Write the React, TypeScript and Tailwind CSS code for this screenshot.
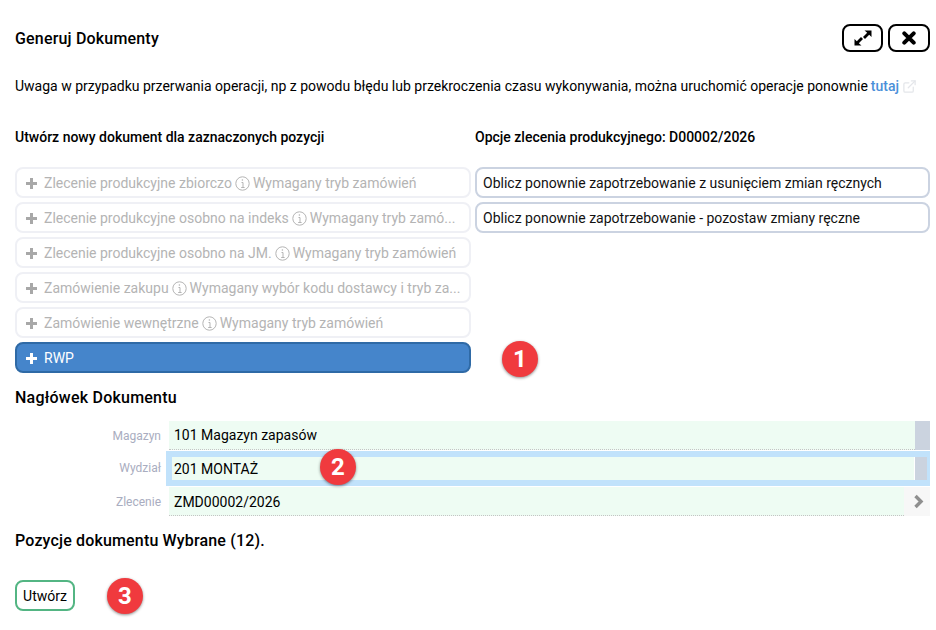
import { FiExternalLink } from "react-icons/fi";

function Plus({ className }: { className: string }) {
  return (
    <svg width="11" height="11" viewBox="0 0 11 11" className={`shrink-0 mr-[7px] ${className}`}>
      <path d="M5.5 0.5V10.5M0.5 5.5H10.5" stroke="currentColor" strokeWidth="3" strokeLinecap="round" />
    </svg>
  );
}

function Info() {
  return (
    <svg width="15" height="15" viewBox="0 0 15 15" fill="none" stroke="#b4b4b4" className="shrink-0 mx-[3px]">
      <circle cx="7.5" cy="7.5" r="6.7" strokeWidth="1" />
      <path d="M6.5 6.5H8V11.5M6.2 11.5H9.6" strokeWidth="1" />
      <circle cx="7.4" cy="4" r="0.8" fill="#b4b4b4" stroke="none" />
    </svg>
  );
}

function Disabled({ name, note }: { name: string; note: string }) {
  return (
    <div className="h-[31px] flex items-center border-2 border-[#eff0f5] rounded-lg bg-white px-[9px] pt-[1px] text-[#b4b4b4] text-[14px] whitespace-nowrap overflow-hidden">
      <Plus className="text-[#a8a8a8]" />
      <span>{name}</span>
      <Info />
      <span>{note}</span>
    </div>
  );
}

function Option({ text }: { text: string }) {
  return (
    <div className="h-[31px] flex items-center border-2 border-[#cbd3e1] rounded-lg bg-white px-[6px] pt-[1px] text-[14px] text-[#111]">
      {text}
    </div>
  );
}

function Badge({ n, className }: { n: number; className: string }) {
  return (
    <div
      className={`absolute w-9 h-9 rounded-full bg-[#f03a3e] text-white font-bold text-[24px] flex items-center justify-center shadow-[0_1px_3px_rgba(0,0,0,0.45)] ${className}`}
    >
      {n}
    </div>
  );
}

export default function App() {
  return (
    <div className="relative w-[936px] h-[630px] bg-white overflow-hidden text-black pl-[15px] pr-[6px] pt-[24px] font-['Roboto',sans-serif]">
      <div className="flex items-center justify-between h-[28px]">
        <div className="text-[16px] font-medium leading-[26px] pt-[2px] tracking-[0.18px]">Generuj Dokumenty</div>
        <div className="flex gap-[5px]">
          <button className="w-[41px] h-[28px] border-2 border-black rounded-lg flex items-center justify-center">
            <svg width="18" height="16" viewBox="0 0 18 16">
              <path d="M10.5 0.5H17.5V7L15.2 4.8L11 9L9 7L13.2 2.8ZM7.5 15.5H0.5V9L2.8 11.2L7 7L9 9L4.8 13.2Z" fill="black" />
            </svg>
          </button>
          <button className="w-[42px] h-[28px] border-2 border-black rounded-lg flex items-center justify-center">
            <svg width="14" height="14" viewBox="0 0 14 14">
              <path d="M2.3 2.3L11.7 11.7M11.7 2.3L2.3 11.7" stroke="black" strokeWidth="4" strokeLinecap="round" />
            </svg>
          </button>
        </div>
      </div>

      <div className="mt-[26px] text-[14px] leading-[16px] flex items-center whitespace-nowrap">
        <span>
          Uwaga w przypadku przerwania operacji, np z powodu błędu lub przekroczenia czasu wykonywania, można uruchomić operacje ponownie{" "}
        </span>
        <span className="text-[#4a90d9] font-medium ml-[3px]">tutaj</span>
        <FiExternalLink className="text-[15px] text-[#e4e6ea] ml-[3px]" />
      </div>

      <div className="mt-[35px] flex gap-[4px]">
        <div className="w-[456px]">
          <div className="text-[14px] font-medium leading-[16px] mb-[22px]">Utwórz nowy dokument dla zaznaczonych pozycji</div>
          <div className="flex flex-col gap-[4px]">
            <Disabled name="Zlecenie produkcyjne zbiorczo" note="Wymagany tryb zamówień" />
            <Disabled name="Zlecenie produkcyjne osobno na indeks" note="Wymagany tryb zamó..." />
            <Disabled name="Zlecenie produkcyjne osobno na JM." note="Wymagany tryb zamówień" />
            <Disabled name="Zamówienie zakupu" note="Wymagany wybór kodu dostawcy i tryb za..." />
            <Disabled name="Zamówienie wewnętrzne" note="Wymagany tryb zamówień" />
            <div className="h-[31px] flex items-center border-2 border-[#2f6aa6] rounded-lg bg-[#4585cb] px-[9px] pt-[1px] text-white text-[14px]">
              <Plus className="text-white" />
              RWP
            </div>
          </div>
        </div>
        <div className="w-[455px]">
          <div className="text-[14px] font-medium leading-[16px] mb-[22px]">Opcje zlecenia produkcyjnego: D00002/2026</div>
          <div className="flex flex-col gap-[4px]">
            <Option text="Oblicz ponownie zapotrzebowanie z usunięciem zmian ręcznych" />
            <Option text="Oblicz ponownie zapotrzebowanie - pozostaw zmiany ręczne" />
          </div>
        </div>
      </div>

      <div className="mt-[16px] text-[16px] font-medium leading-[18px] tracking-[0.22px]">Nagłówek Dokumentu</div>

      <div className="mt-[14px] flex flex-col w-[915px]">
        <div className="flex h-[29px]">
          <div className="w-[146px] text-right text-[12px] text-[#a9adc0] leading-[30px]">Magazyn</div>
          <div className="ml-[8px] flex-1 bg-[#eefcf3] border-b border-dotted border-[#c4c4c4] pl-[5px] text-[14px] leading-[29px]">101 Magazyn zapasów</div>
          <div className="w-[15px] bg-[#cbd3df]" />
        </div>
        <div className="flex h-[35px] mt-[1px]">
          <div className="w-[146px] text-right text-[12px] text-[#a9adc0] leading-[35px]">Wydział</div>
          <div className="ml-[5px] flex-1 flex border-y-[6px] border-l-[6px] border-r-[3px] border-[#c1e2fb] bg-[#eefcf3]">
            <div className="flex-1 text-[14px] leading-[25px] pl-[2px] border-r border-white">201 MONTAŻ</div>
            <div className="w-[12px] bg-[#cbd3df]" />
          </div>
        </div>
        <div className="flex h-[29px] mt-[1px]">
          <div className="w-[146px] text-right text-[12px] text-[#a9adc0] leading-[30px]">Zlecenie</div>
          <div className="ml-[8px] flex-1 bg-[#eefcf3] border-b border-dotted border-[#c4c4c4] pl-[5px] pt-[1px] text-[14px] leading-[29px]">ZMD00002/2026</div>
          <div className="w-[26px] bg-[#f7f7f7] flex items-center justify-center">
            <svg width="11" height="15" viewBox="0 0 11 15" className="ml-[3px]">
              <path d="M2.5 2L8 7.5L2.5 13" fill="none" stroke="#8f8f8f" strokeWidth="3.4" />
            </svg>
          </div>
        </div>
      </div>

      <div className="mt-[15px] text-[16px] font-medium leading-[20px] tracking-[0.16px]">Pozycje dokumentu Wybrane (12).</div>

      <button className="mt-[29px] block w-[60px] h-[31px] border-2 border-[#53b583] rounded-lg bg-white text-[14px] pt-[1px]">Utwórz</button>

      <Badge n={1} className="left-[502px] top-[341px]" />
      <Badge n={2} className="left-[320px] top-[449px]" />
      <Badge n={3} className="left-[107px] top-[578px]" />
    </div>
  );
}
